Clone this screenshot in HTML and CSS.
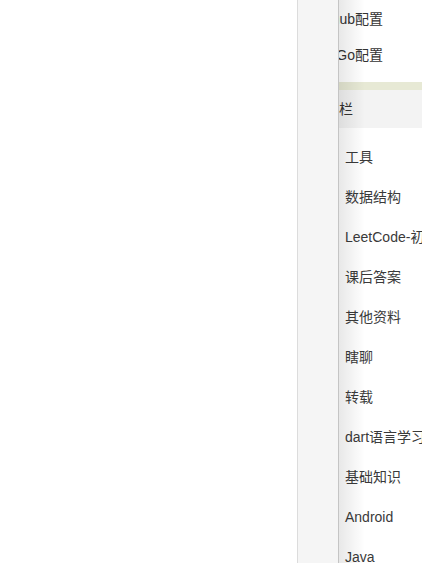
FILE: index.html
```html
<!DOCTYPE html>
<html lang="zh">
<head>
<meta charset="utf-8">
<title>Sidebar</title>
<link rel="stylesheet" href="styles.css">
</head>
<body>
<div class="page">
  <main class="main"></main>
  <aside class="rail"></aside>
  <nav class="drawer">
    <ul class="sub-list">
      <li class="sub-item"><span class="pre">Github</span>配置</li>
      <li class="sub-item"><span class="pre">HuGo</span>配置</li>
    </ul>
    <div class="band"></div>
    <div class="section-head"><span class="pre head-pre">侧边</span>栏</div>
    <ul class="menu">
      <li class="menu-item">工具</li>
      <li class="menu-item">数据结构</li>
      <li class="menu-item">LeetCode-初级算法</li>
      <li class="menu-item">课后答案</li>
      <li class="menu-item">其他资料</li>
      <li class="menu-item">瞎聊</li>
      <li class="menu-item">转载</li>
      <li class="menu-item">dart语言学习</li>
      <li class="menu-item">基础知识</li>
      <li class="menu-item">Android</li>
      <li class="menu-item">Java</li>
    </ul>
  </nav>
</div>
</body>
</html>
```
FILE: styles.css
```css
html, body {
  margin: 0;
  padding: 0;
  height: 100%;
  overflow: hidden;
  background: #fff;
}
.page {
  display: flex;
  height: 563px;
  font-family: "Liberation Sans", Arial, "Noto Sans CJK SC", sans-serif;
  font-size: 14px;
  color: #333;
}
.main {
  width: 297px;
  flex: none;
  background: #fff;
}
.rail {
  width: 40px;
  flex: none;
  border-left: 1px solid #dcdcdc;
  background: #f5f5f5;
}
.drawer {
  position: relative;
  flex: 1;
  min-width: 0;
  overflow: hidden;
  border-left: 1px solid #c4c4c4;
  background: #fff;
  white-space: nowrap;
}
.drawer::after {
  content: "";
  position: absolute;
  top: 0;
  bottom: 0;
  left: 0;
  width: 26px;
  background: linear-gradient(to right, rgba(0,0,0,0.09), rgba(0,0,0,0));
  pointer-events: none;
}
.sub-list, .menu {
  list-style: none;
  margin: 0;
  padding: 0;
}
.sub-list {
  padding-top: 1px;
}
.sub-item {
  height: 36px;
  line-height: 36px;
  margin-left: -26px;
}
.pre {
  display: inline-block;
  width: 42px;
  text-align: right;
}
.band {
  height: 8px;
  margin-top: 9px;
  background: #e7e9d5;
}
.section-head {
  height: 38px;
  line-height: 38px;
  background: #f3f3f3;
  margin-left: -28px;
}
.head-pre {
  width: 28px;
  text-align: left;
}
.menu {
  padding-top: 9px;
}
.menu-item {
  height: 40px;
  line-height: 40px;
  padding-left: 6px;
  color: #3a3a3a;
}
```
